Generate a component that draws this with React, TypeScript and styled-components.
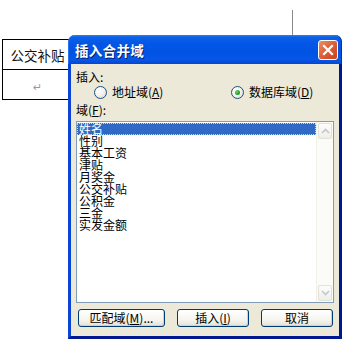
import React from "react";
import styled, { createGlobalStyle } from "styled-components";

const Global = createGlobalStyle`
  html, body { margin: 0; padding: 0; background: #ffffff; }
  body { font-family: "Noto Sans CJK SC", "Liberation Sans", sans-serif; }
  * { box-sizing: border-box; }
`;

const Page = styled.div`
  position: relative;
  width: 349px;
  height: 347px;
  overflow: hidden;
  padding-top: 10px;
  background: #fff;
`;

const MarginLine = styled.div`
  margin-left: 292px;
  width: 1px;
  height: 25px;
  background: #8a8a8a;
`;

const DocTable = styled.table`
  margin: 4px 0 0 2px;
  border-collapse: collapse;
  font-family: "Noto Sans CJK SC", sans-serif;
`;

const Cell = styled.td`
  border: 1px solid #000;
  width: 70px;
  height: 30px;
  padding: 0;
  text-align: center;
  vertical-align: middle;
  font-size: 13.5px;
  color: #111;
  white-space: nowrap;
`;

const WideCell = styled(Cell)`
  width: 120px;
`;

const ParaMark = styled.span`
  color: #9a9a9a;
  font-size: 11px;
  font-family: "DejaVu Sans", sans-serif;
`;

const Dialog = styled.div`
  position: absolute;
  left: 68px;
  top: 35px;
  width: 274px;
  height: 304px;
  display: flex;
  flex-direction: column;
`;

const TitleBar = styled.div`
  height: 29px;
  border-radius: 7px 7px 0 0;
  background: linear-gradient(
    to bottom,
    #2f7ff0 0%,
    #0b5fe6 8%,
    #0456e6 30%,
    #0153e3 60%,
    #0656e8 85%,
    #0346d2 100%
  );
  display: flex;
  align-items: center;
  padding: 0 4px 0 7px;
  box-shadow: inset 1px 0 0 #2a6ff0, inset -1px 0 0 #0030b0;
`;

const Title = styled.div`
  flex: 1;
  color: #fff;
  font-weight: bold;
  font-size: 13.5px;
  letter-spacing: 0.3px;
  text-shadow: 1px 1px 0 #0a1e6a;
  padding-top: 1px;
`;

const CloseBtn = styled.div`
  width: 20px;
  height: 20px;
  border: 1px solid #fff;
  border-radius: 3px;
  background: linear-gradient(135deg, #eb8e6b 0%, #e0623a 45%, #c8411b 100%);
  display: flex;
  align-items: center;
  justify-content: center;
  margin-top: 1px;
`;

const Body = styled.div`
  flex: 1;
  background: #ece9d8;
  border-left: 3px solid #0b45d6;
  border-right: 3px solid #00188f;
  border-bottom: 3px solid #00188f;
  padding: 6px 5px 0 5px;
  display: flex;
  flex-direction: column;
  font-size: 12px;
  color: #000;
`;

const Label = styled.div<{ $mt?: number }>`
  height: 14px;
  line-height: 14px;
  margin-top: ${(p) => p.$mt ?? 0}px;
  white-space: nowrap;
`;

const RadioRow = styled.div`
  display: grid;
  grid-template-columns: 137px auto;
  padding-left: 18px;
  margin-top: 1px;
  height: 14px;
  align-items: center;
`;

const RadioItem = styled.div`
  display: flex;
  align-items: center;
  gap: 5px;
  white-space: nowrap;
  line-height: 14px;
`;

const RadioCircle = styled.div<{ $on?: boolean }>`
  width: 13px;
  height: 13px;
  border-radius: 50%;
  border: 1px solid #1c5180;
  background: radial-gradient(circle at 35% 35%, #ffffff 0%, #f4f3ee 45%, #d6d4c8 100%);
  display: flex;
  align-items: center;
  justify-content: center;
  &::after {
    content: "";
    display: ${(p) => (p.$on ? "block" : "none")};
    width: 5px;
    height: 5px;
    border-radius: 50%;
    background: radial-gradient(circle at 35% 35%, #6fd36f 0%, #21a121 60%, #1a7d1a 100%);
  }
`;

const ListBox = styled.div`
  margin-top: 4px;
  height: 182px;
  border: 1px solid #7f9db9;
  background: #fff;
  display: flex;
`;

const Items = styled.div`
  flex: 1;
  padding-top: 1px;
`;

const Item = styled.div<{ $sel?: boolean }>`
  height: 12px;
  line-height: 12px;
  padding-left: 2px;
  font-size: 12px;
  white-space: nowrap;
  color: ${(p) => (p.$sel ? "#fff" : "#000")};
  background: ${(p) => (p.$sel ? "#316ac5" : "transparent")};
  outline: ${(p) => (p.$sel ? "1px dotted #c9d6ee" : "none")};
  outline-offset: -1px;
`;

const ScrollBar = styled.div`
  width: 17px;
  display: flex;
  flex-direction: column;
  background: #fbfbf8;
  border-left: 1px solid #f0efe8;
`;

const ScrollTrack = styled.div`
  flex: 1;
`;

const ScrollBtn = styled.div`
  height: 16px;
  margin: 1px;
  border: 1px solid #e3e1d6;
  border-radius: 2px;
  background: linear-gradient(to bottom, #fdfdfb, #efeee6);
  display: flex;
  align-items: center;
  justify-content: center;
`;

const ButtonRow = styled.div`
  display: flex;
  gap: 12px;
  margin: 6px 0 0 2px;
`;

const Button = styled.div<{ $w: number }>`
  width: ${(p) => p.$w}px;
  height: 18px;
  border: 1px solid #003c74;
  border-radius: 3px;
  background: linear-gradient(to bottom, #ffffff 0%, #f6f5f0 60%, #e3e1d8 100%);
  box-shadow: inset -1px -1px 0 #d6d0c5;
  display: flex;
  align-items: center;
  justify-content: center;
  font-size: 12px;
  line-height: 14px;
  white-space: nowrap;
`;

const U = styled.span`
  text-decoration: underline;
`;

const Chevron = ({ up }: { up?: boolean }) => (
  <svg width="9" height="6" viewBox="0 0 9 6">
    <path
      d={up ? "M1 5 L4.5 1.5 L8 5" : "M1 1 L4.5 4.5 L8 1"}
      fill="none"
      stroke="#c3c6d0"
      strokeWidth="1.6"
    />
  </svg>
);

const items = ["姓名", "性别", "基本工资", "津贴", "月奖金", "公交补贴", "公积金", "三金", "实发金额"];

export default function App() {
  return (
    <Page>
      <Global />
      <MarginLine />
      <DocTable>
        <tbody>
          <tr>
            <Cell>公交补贴</Cell>
            <WideCell />
          </tr>
          <tr>
            <Cell>
              <ParaMark>↵</ParaMark>
            </Cell>
            <WideCell />
          </tr>
        </tbody>
      </DocTable>
      <Dialog>
        <TitleBar>
          <Title>插入合并域</Title>
          <CloseBtn>
            <svg width="12" height="12" viewBox="0 0 12 12">
              <path d="M2 2 L10 10 M10 2 L2 10" stroke="#fff" strokeWidth="2.2" strokeLinecap="square" />
            </svg>
          </CloseBtn>
        </TitleBar>
        <Body>
          <Label>插入:</Label>
          <RadioRow>
            <RadioItem>
              <RadioCircle />
              <span>
                地址域(<U>A</U>)
              </span>
            </RadioItem>
            <RadioItem>
              <RadioCircle $on />
              <span>
                数据库域(<U>D</U>)
              </span>
            </RadioItem>
          </RadioRow>
          <Label $mt={4}>
            域(<U>F</U>):
          </Label>
          <ListBox>
            <Items>
              {items.map((t, i) => (
                <Item key={t} $sel={i === 0}>
                  {t}
                </Item>
              ))}
            </Items>
            <ScrollBar>
              <ScrollBtn>
                <Chevron up />
              </ScrollBtn>
              <ScrollTrack />
              <ScrollBtn>
                <Chevron />
              </ScrollBtn>
            </ScrollBar>
          </ListBox>
          <ButtonRow>
            <Button $w={87}>
              匹配域(<U>M</U>)...
            </Button>
            <Button $w={72}>
              插入(<U>I</U>)
            </Button>
            <Button $w={72}>取消</Button>
          </ButtonRow>
        </Body>
      </Dialog>
    </Page>
  );
}
